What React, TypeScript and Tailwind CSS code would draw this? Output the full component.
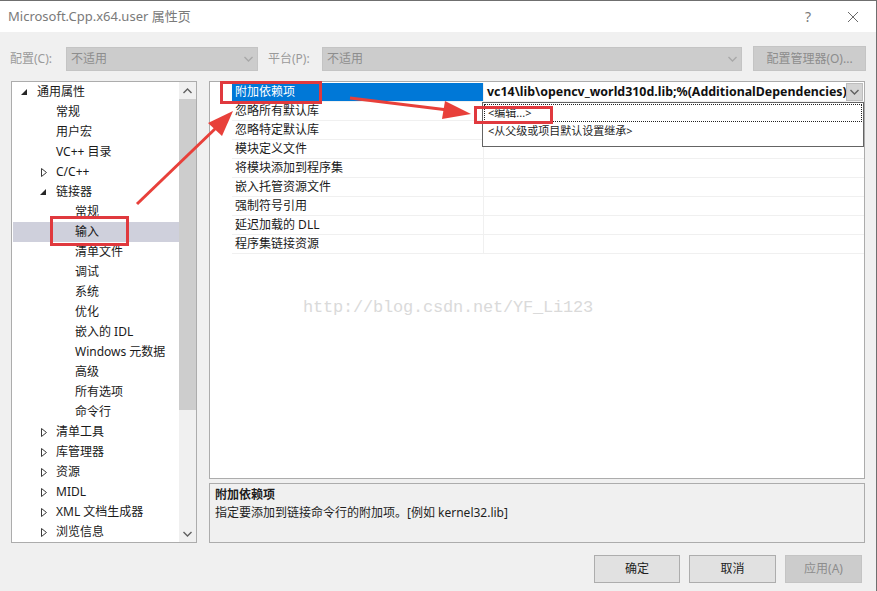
import React from "react";

const FONT = '"Noto Sans", "Noto Sans CJK SC", sans-serif';

type Node = { label: string; level: number; expander?: "open" | "closed"; selected?: boolean };

const tree: Node[] = [
  { label: "通用属性", level: 0, expander: "open" },
  { label: "常规", level: 1 },
  { label: "用户宏", level: 1 },
  { label: "VC++ 目录", level: 1 },
  { label: "C/C++", level: 1, expander: "closed" },
  { label: "链接器", level: 1, expander: "open" },
  { label: "常规", level: 2 },
  { label: "输入", level: 2, selected: true },
  { label: "清单文件", level: 2 },
  { label: "调试", level: 2 },
  { label: "系统", level: 2 },
  { label: "优化", level: 2 },
  { label: "嵌入的 IDL", level: 2 },
  { label: "Windows 元数据", level: 2 },
  { label: "高级", level: 2 },
  { label: "所有选项", level: 2 },
  { label: "命令行", level: 2 },
  { label: "清单工具", level: 1, expander: "closed" },
  { label: "库管理器", level: 1, expander: "closed" },
  { label: "资源", level: 1, expander: "closed" },
  { label: "MIDL", level: 1, expander: "closed" },
  { label: "XML 文档生成器", level: 1, expander: "closed" },
  { label: "浏览信息", level: 1, expander: "closed" },
];

const props = [
  "附加依赖项",
  "忽略所有默认库",
  "忽略特定默认库",
  "模块定义文件",
  "将模块添加到程序集",
  "嵌入托管资源文件",
  "强制符号引用",
  "延迟加载的 DLL",
  "程序集链接资源",
];

function Expander({ kind }: { kind?: "open" | "closed" }) {
  if (!kind) return <span className="w-[8px] h-[8px]" />;
  if (kind === "open")
    return (
      <svg width="8" height="8" viewBox="0 0 8 8">
        <polygon points="6,1 6,7 0,7" fill="#262626" />
      </svg>
    );
  return (
    <svg width="8" height="9" viewBox="0 0 8 9">
      <polygon points="1.5,0.5 6.5,4.5 1.5,8.5" fill="none" stroke="#3a3a3a" strokeWidth="1" />
    </svg>
  );
}

function Chevron({ up, color = "#555" }: { up?: boolean; color?: string }) {
  return (
    <svg width="9" height="6" viewBox="0 0 9 6">
      <polyline
        points={up ? "0.5,5 4.5,1 8.5,5" : "0.5,1 4.5,5 8.5,1"}
        fill="none"
        stroke={color}
        strokeWidth="1.4"
      />
    </svg>
  );
}

export default function App() {
  return (
    <div
      className="relative w-[877px] h-[591px] overflow-hidden bg-[#f0f0f0] border-t border-r border-[#6f6f6f] text-[12px] text-[#1e1e1e]"
      style={{ fontFamily: FONT }}
    >
      {/* Title bar */}
      <div className="h-[31px] bg-white flex items-center pl-[8px] text-[13px] text-[#7a7a7a]">
        <span className="flex-1">Microsoft.Cpp.x64.user 属性页</span>
        <span className="w-[14px] text-center mr-[32px] text-[14px]">?</span>
        <svg width="12" height="12" viewBox="0 0 12 12" className="mr-[17px]">
          <path d="M1 1 L11 11 M11 1 L1 11" stroke="#6a6a6a" strokeWidth="1" />
        </svg>
      </div>

      {/* Toolbar */}
      <div className="flex items-center h-[25px] mt-[14px] pl-[10px] text-[#9a9a9a]">
        <span className="w-[56px] shrink-0">配置(C):</span>
        <div className="w-[192px] shrink-0 h-[24px] bg-[#cccccc] border border-[#c4c4c4] flex items-center px-[4px] text-[#8d8d8d]">
          <span className="flex-1">不适用</span>
          <Chevron color="#a8a8a8" />
        </div>
        <span className="ml-[10px] w-[54px] shrink-0">平台(P):</span>
        <div className="w-[420px] shrink-0 h-[24px] bg-[#cccccc] border border-[#c4c4c4] flex items-center px-[4px] text-[#8d8d8d]">
          <span className="flex-1">不适用</span>
          <Chevron color="#a8a8a8" />
        </div>
        <div className="ml-[11px] w-[113px] shrink-0 h-[25px] bg-[#cccccc] border border-[#c4c4c4] flex items-center justify-center text-[#8d8d8d]">
          配置管理器(O)...
        </div>
      </div>

      {/* Main area */}
      <div className="flex mt-[10px] pl-[11px] h-[462px]">
        {/* Tree */}
        <div className="w-[186px] shrink-0 h-[462px] bg-white border border-[#acacac] flex">
          <div className="flex-1 min-w-0 pl-[1px]">
            {tree.map((n, i) => (
              <div
                key={i}
                className={`h-[20px] flex items-center ${n.selected ? "bg-[#cfd0dc]" : ""}`}
                style={{ paddingLeft: 8 + n.level * 19 }}
              >
                <span className="w-[16px] shrink-0 flex items-center">
                  <Expander kind={n.expander} />
                </span>
                <span className="whitespace-nowrap text-[#1a1a1a]">{n.label}</span>
              </div>
            ))}
          </div>
          <div className="w-[17px] shrink-0 bg-[#f0f0f0] flex flex-col items-center">
            <div className="h-[17px] flex items-center justify-center">
              <Chevron up color="#606060" />
            </div>
            <div className="w-[17px] h-[311px] bg-[#cdcdcd]" />
            <div className="flex-1" />
            <div className="h-[17px] flex items-center justify-center">
              <Chevron color="#606060" />
            </div>
          </div>
        </div>

        {/* Right */}
        <div className="ml-[12px] w-[656px] shrink-0 flex flex-col">
          <div className="h-[399px] bg-white border border-[#acacac] flex">
            <div className="w-[22px] shrink-0" />
            <div className="flex-1 min-w-0 pt-[1px]">
              {props.map((p, i) => (
                <div key={i} className="h-[19px] flex border-b border-[#f0f0f0]">
                  <div
                    className={`w-[251px] shrink-0 flex items-center pl-[3px] ${
                      i === 0 ? "bg-[#0078d7] text-white" : "text-[#1a1a1a]"
                    }`}
                  >
                    {p}
                  </div>
                  <div className="flex-1 min-w-0 flex items-center border-l border-[#f0f0f0]">
                    {i === 0 && (
                      <>
                        <span className="flex-1 min-w-0 overflow-hidden pl-[3px] font-bold text-[12.4px] text-[#111] whitespace-nowrap">
                          vc14\lib\opencv_world310d.lib;%(AdditionalDependencies)
                        </span>
                        <span className="w-[17px] shrink-0 h-[18px] mr-[1px] bg-[#d4d4d4] border border-[#bdbdbd] flex items-center justify-center">
                          <Chevron color="#606060" />
                        </span>
                      </>
                    )}
                  </div>
                </div>
              ))}
            </div>
          </div>
          <div className="mt-[4px] h-[60px] bg-[#f0f0f0] border border-[#acacac] px-[5px] pt-[2px]">
            <div className="font-bold leading-[18px]">附加依赖项</div>
            <div className="leading-[18px]">指定要添加到链接命令行的附加项。[例如 kernel32.lib]</div>
          </div>
        </div>
      </div>

      {/* Buttons */}
      <div className="flex justify-end mt-[12px] pr-[14px] gap-[9px]">
        <div className="w-[86px] h-[28px] bg-[#e1e1e1] border border-[#adadad] flex items-center justify-center">确定</div>
        <div className="w-[87px] h-[28px] bg-[#e1e1e1] border border-[#adadad] flex items-center justify-center">取消</div>
        <div className="w-[77px] h-[28px] bg-[#cccccc] border border-[#c4c4c4] flex items-center justify-center text-[#8d8d8d]">
          应用(A)
        </div>
      </div>

      {/* Dropdown list overlay */}
      <div className="absolute left-[482px] top-[101px] w-[382px] h-[45px] bg-white border border-[#646464] p-[1px]">
        <div className="h-[18px] border border-dotted border-[#222] flex items-center pl-[3px] text-[11px]">&lt;编辑...&gt;</div>
        <div className="h-[18px] flex items-center pl-[4px] text-[11px]">&lt;从父级或项目默认设置继承&gt;</div>
      </div>

      {/* Watermark */}
      <div
        className="absolute left-[303px] top-[294px] text-[17px] text-[#dadada]"
        style={{ fontFamily: '"Liberation Mono", "DejaVu Sans Mono", monospace', letterSpacing: "-0.2px" }}
      >
        http://blog.csdn.net/YF_Li123
      </div>

      {/* Red boxes */}
      <div className="absolute left-[220px] top-[80px] w-[102px] h-[23px] border-[3px] border-[#e0393e]" />
      <div className="absolute left-[50px] top-[215px] w-[79px] h-[30px] border-[3px] border-[#e0393e]" />
      <div className="absolute left-[474px] top-[105px] w-[79px] h-[18px] border-[3px] border-[#e0393e]" />

      {/* Arrows */}
      <svg className="absolute left-0 top-0" width="877" height="591" viewBox="0 0 877 591">
        <line x1="137" y1="203" x2="217" y2="126" stroke="#e8403a" strokeWidth="3" />
        <polygon points="233,110 208,122 222,135" fill="#e8403a" />
        <line x1="350" y1="97" x2="448" y2="109" stroke="#e8403a" strokeWidth="3" />
        <polygon points="471,113 445,100 442,118" fill="#e8403a" />
      </svg>
    </div>
  );
}
